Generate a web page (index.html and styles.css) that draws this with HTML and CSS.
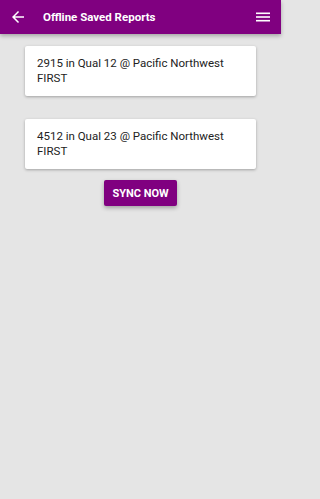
FILE: index.html
```
<!DOCTYPE html>
<html>
<head>
<meta charset="utf-8">
<meta name="viewport" content="width=device-width, initial-scale=1">
<link rel="stylesheet" href="styles.css">
</head>
<body>
<div class="app">
  <header class="toolbar">
    <span class="icon back">
      <svg width="12" height="12" viewBox="4 4 16 16"><path d="M20 11H7.83l5.59-5.59L12 4l-8 8 8 8 1.41-1.41L7.83 13H20v-2z" fill="#fff"/></svg>
    </span>
    <span class="title">Offline Saved Reports</span>
    <span class="icon menu">
      <svg width="14" height="10" viewBox="0 0 14 10"><rect x="0" y="0.5" width="14" height="1.6" fill="#fff"/><rect x="0" y="4.2" width="14" height="1.6" fill="#fff"/><rect x="0" y="7.9" width="14" height="1.6" fill="#fff"/></svg>
    </span>
  </header>
  <main class="content">
    <div class="card">2915 in Qual 12 @ Pacific Northwest FIRST</div>
    <div class="card">4512 in Qual 23 @ Pacific Northwest FIRST</div>
    <button class="sync">SYNC NOW</button>
  </main>
</div>
</body>
</html>
```
FILE: styles.css
```
html, body {
  margin: 0;
  padding: 0;
  background: #e5e5e5;
  font-family: Roboto, "Noto Sans", sans-serif;
  height: 100%;
}
.app {
  width: 281px;
  min-height: 499px;
  background: #e5e5e5;
}
.toolbar {
  height: 34px;
  background: #800080;
  display: flex;
  align-items: center;
  box-shadow: 0 2px 4px rgba(0, 0, 0, 0.28);
  position: relative;
}
.icon {
  display: flex;
  align-items: center;
  justify-content: center;
}
.back {
  width: 12px;
  margin-left: 12px;
}
.title {
  color: #fff;
  font-weight: bold;
  font-size: 11.5px;
  margin-left: 19px;
  flex: 1;
}
.menu {
  width: 14px;
  margin-right: 11px;
}
.content {
  display: flex;
  flex-direction: column;
  align-items: center;
  padding-top: 12px;
}
.card {
  width: 207px;
  background: #fff;
  border-radius: 2px;
  box-shadow: 0 1px 3px rgba(0, 0, 0, 0.3);
  padding: 10px 12px 11px;
  font-size: 11.5px;
  line-height: 14.5px;
  color: #222;
  margin-bottom: 23px;
}
.card + .card {
  margin-bottom: 11px;
}
.sync {
  width: 73px;
  height: 26px;
  background: #800080;
  color: #fff;
  border: none;
  border-radius: 2px;
  font-family: Roboto, "Noto Sans", sans-serif;
  font-weight: bold;
  font-size: 11px;
  padding: 0;
  box-shadow: 0 2px 4px rgba(0, 0, 0, 0.3);
}
```
